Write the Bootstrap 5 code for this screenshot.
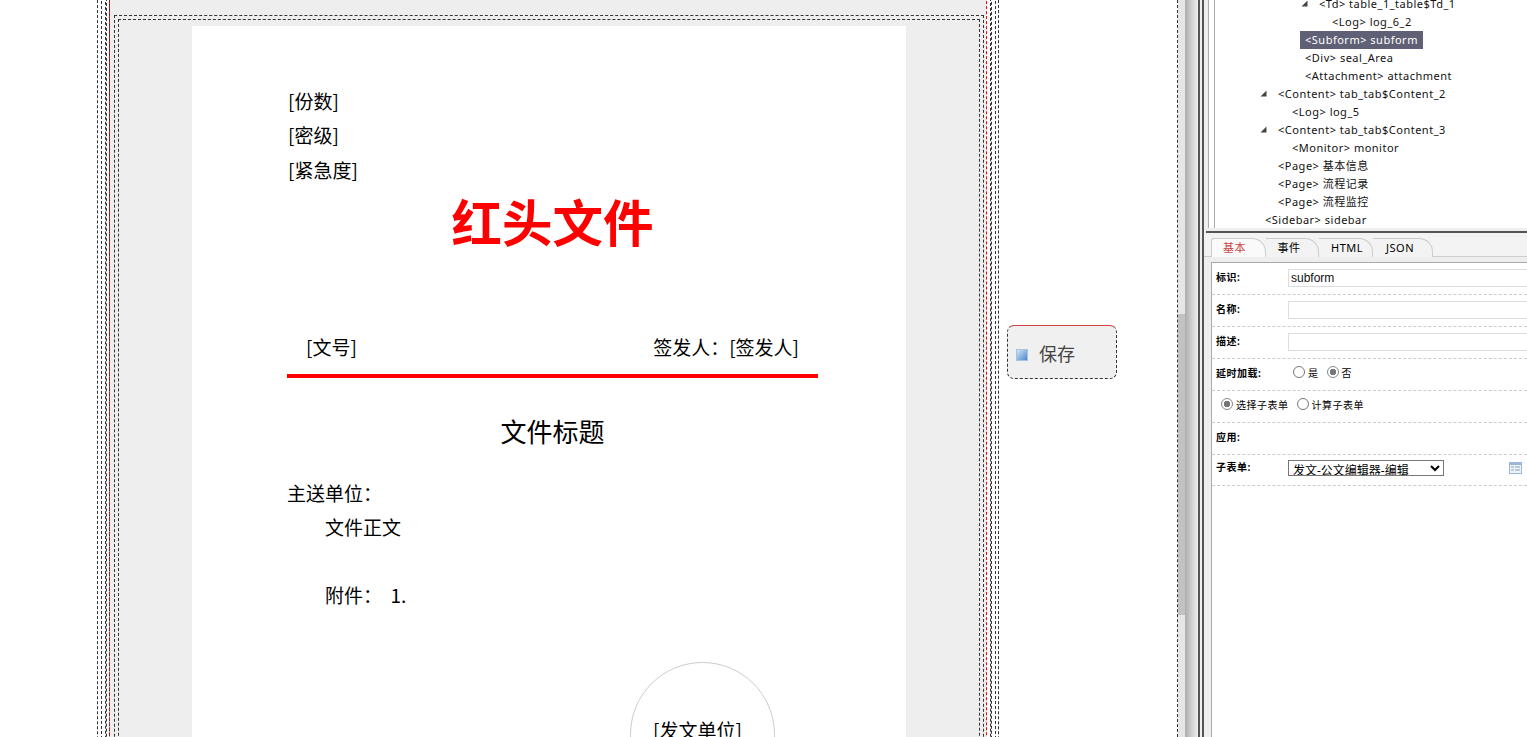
<!DOCTYPE html>
<html lang="zh">
  <head>
    <meta charset="UTF-8">
    <title>表单设计器</title>
    <link href="https://cdn.jsdelivr.net/npm/bootstrap@5.3.0/dist/css/bootstrap.min.css" rel="stylesheet">
    <style>
      html, body { height: 737px; overflow: hidden; }
      body { background: #fff; color: #000; font-family: "Liberation Sans", "Noto Sans CJK SC", sans-serif; }

      /* canvas with the nested design boxes */
      .canvas-pane { width: 1178px; height: 737px; border-right: 1px dashed #333; overflow: hidden; flex: none; }
      .form-col { width: 902px; margin-left: 97px; margin-top: -40px; flex: none; }
      .dash { border: 1px dashed #333; }
      .b1 { padding: 0 2px 0 3px; height: 1200px; }
      .b2 { padding: 0 3px 0 3px; height: 100%; }
      .b3 { height: 100%; padding: 0; }
      .b3a { height: 100%; padding: 0 3px 0 2px; }
      .b4 { height: 100%; border-left: 1px dashed #333; position: relative; background: #eee; padding: 51px 3px 0 4px; }
      .b4::before { content: ""; position: absolute; top: -3px; bottom: 0; left: -1px; right: 0; border: 1px dashed #f00; border-width: 0 1px; }
      .b5 { height: 100%; padding: 3px 3px 0 3px; }
      .b6 { height: 100%; padding: 6px 73px 0 73px; }
      .paper { background: #fff; height: 100%; padding: 58px 88px 0 95px; font-family: "Noto Sans CJK SC", "Liberation Sans", sans-serif; font-size: 19px; line-height: 34px; }
      .num-line { padding-left: 1px; height: 34.4px; }
      .red-title { color: #f00; font-size: 50.5px; font-weight: 700; line-height: 60px; text-align: center; margin-top: 3px; height: 60px; }
      .sign-row { margin-top: 80px; padding: 0 19px 0 19px; height: 34px; }
      .red-rule { height: 4px; background: #f00; margin-top: 9.8px; }
      .doc-title { font-size: 26px; text-align: center; margin-top: 33.2px; line-height: 40px; }
      .to-line { margin-top: 25px; }
      .body-line { padding-left: 38px; }
      .attach-line { padding-left: 38px; margin-top: 34px; }
      .seal { width: 145px; height: 145px; border-radius: 50%; border: 1.5px solid #ccc; margin: 50px 0 0 343px; padding: 50px 10px 0 0; text-align: center; white-space: nowrap; }

      .save-col { margin-left: 8px; padding-top: 325px; flex: none; }
      .save-btn { width: 110px; height: 54px; background: #f0f0f0; border: 1px dashed #333; border-top: 1px solid #c44; border-radius: 7px; padding: 6px 0 0 8px; color: #444; font-size: 18px; gap: 11px; }
      .save-ico { width: 12px; height: 12px; background: linear-gradient(135deg, #d3e4f6, #4a88cb); border: 1px solid #a8c2e0; }

      /* splitter */
      .split { width: 26px; flex: none; position: relative; }
      .split-flat { width: 7px; background: #e6e6e6; }
      .split-thumb { position: absolute; left: 0; top: 314px; width: 7px; height: 301px; background: #c2c2c2; }
      .split-grad { width: 13px; background: linear-gradient(90deg, #adadad, #efefef); }
      .split-dark { width: 2px; background: #555; }
      .split-light { width: 2px; background: #eee; }

      /* tree + properties */
      .side { width: 323px; flex: none; background: #eee; overflow: hidden; font-family: "Noto Sans", "Noto Sans CJK SC", sans-serif; font-size: 11px; letter-spacing: .5px; }
      .tree-wrap { height: 228px; padding-left: 4px; overflow: hidden; }
      .tree-out { height: 100%; border-left: 1px solid #aaa; background: #fff; padding-left: 5px; }
      .tree-in { height: 100%; border-left: 1px solid #aaa; overflow: hidden; }
      .tree-list { margin-top: -5px; color: #111; }
      .node { height: 18px; line-height: 18px; white-space: nowrap; position: relative; }
      .at-50 { padding-left: 50px; } .at-63 { padding-left: 63px; } .at-77 { padding-left: 77px; }
      .at-90 { padding-left: 90px; } .at-104 { padding-left: 104px; } .at-117 { padding-left: 117px; }
      .sel-node { display: inline-block; background: #5f6075; color: #fff; height: 18px; padding: 0 5px; margin-left: -5px; }
      .arrow { position: absolute; top: 5px; width: 7px; height: 7px; }
      .arrow-td { left: 86px; }
      .arrow-ct { left: 45px; }
      .side-bar { height: 2px; background: #555; margin-top: 3px; margin-left: 2px; }

      .tab-strip { height: 24px; padding: 5px 0 0 7px; border-bottom: 1px solid #ccc; background: #f3f3f3; }
      .tab-item { height: 19px; line-height: 18px; text-align: center; border: 1px solid #ccc; border-bottom: 0; border-left: 0; border-top-right-radius: 14px; background: #f3f3f3; }
      .tab-a { width: 55px; color: #c44; border-left: 1px solid #ccc; border-top-left-radius: 3px; background: #fafafa; padding-right: 8px; }
      .tab-b { width: 53px; padding-right: 6px; }
      .tab-c { width: 54px; padding-left: 3px; }
      .tab-d { width: 60px; padding-right: 5px; }

      .props { margin: 5px 0 0 7px; background: #fff; height: 480px; border-left: 1px solid #aaa; border-top: 1px solid #aaa; }
      .prop-row { height: 32px; border-bottom: 1px dashed #ccc; padding: 0 0 2px 4px; white-space: nowrap; }
      .prop-row-last { height: 31px; padding-bottom: 5px; }
      .prop-label { width: 72px; flex: none; font-size: 10px; font-weight: 700; }
      .prop-input { width: 260px; height: 18px; border: 1px solid #ddd; background: #fff; padding: 0 2px; font-family: "Liberation Sans", sans-serif; font-size: 12px; letter-spacing: 0; line-height: 16px; color: #111; flex: none; }
      .prop-radio { appearance: none; width: 12px; height: 12px; border: 1px solid #777; border-radius: 50%; background: #fff; margin: 0 3px 3px 5px; flex: none; }
      .prop-radio:checked { background: radial-gradient(circle, #777 0 3px, #fff 3.5px); border-color: #888; }
      .prop-opt { font-size: 10px; margin-right: 3px; }
      .prop-select { width: 156px; height: 16px; font-size: 12px; letter-spacing: 0; font-family: inherit; padding: 0; border: 1px solid #777; background: #fff; flex: none; }
      .form-ico { margin-left: 65px; }
    </style>
  </head>
  <body class="d-flex">
    <div class="canvas-pane d-flex">
      <div class="form-col">
        <div class="dash b1">
          <div class="dash b2">
            <div class="dash b3">
              <div class="dash b3a">
                <div class="b4">
                  <div class="dash b5">
                    <div class="dash b6">
                      <div class="paper">
                        <div class="num-line">[份数]</div>
                        <div class="num-line">[密级]</div>
                        <div class="num-line">[紧急度]</div>
                        <div class="red-title">红头文件</div>
                        <div class="sign-row d-flex justify-content-between">
                          <span>[文号]</span>
                          <span>签发人：[签发人]</span>
                        </div>
                        <div class="red-rule"></div>
                        <div class="doc-title">文件标题</div>
                        <div class="to-line">主送单位：</div>
                        <div class="body-line">文件正文</div>
                        <div class="attach-line">附件： &nbsp;1.</div>
                        <div class="seal">[发文单位]</div>
                      </div>
                    </div>
                  </div>
                </div>
              </div>
            </div>
          </div>
        </div>
      </div>
      <div class="save-col">
        <div class="save-btn d-flex align-items-center">
          <span class="save-ico"></span>
          <span>保存</span>
        </div>
      </div>
    </div>

    <div class="split d-flex">
      <div class="split-flat"></div>
      <div class="split-thumb"></div>
      <div class="split-grad"></div>
      <div class="split-dark"></div>
      <div class="split-light"></div>
      <div class="split-dark"></div>
    </div>

    <div class="side">
      <div class="tree-wrap">
        <div class="tree-out">
          <div class="tree-in">
            <div class="tree-list">
              <div class="node at-104"><svg class="arrow arrow-td" viewBox="0 0 7 7"><polygon points="6.5,0.5 6.5,6.5 0.5,6.5" fill="#444"/></svg>&lt;Td&gt; table_1_table$Td_1</div>
              <div class="node at-117">&lt;Log&gt; log_6_2</div>
              <div class="node at-90"><span class="sel-node">&lt;Subform&gt; subform</span></div>
              <div class="node at-90">&lt;Div&gt; seal_Area</div>
              <div class="node at-90">&lt;Attachment&gt; attachment</div>
              <div class="node at-63"><svg class="arrow arrow-ct" viewBox="0 0 7 7"><polygon points="6.5,0.5 6.5,6.5 0.5,6.5" fill="#444"/></svg>&lt;Content&gt; tab_tab$Content_2</div>
              <div class="node at-77">&lt;Log&gt; log_5</div>
              <div class="node at-63"><svg class="arrow arrow-ct" viewBox="0 0 7 7"><polygon points="6.5,0.5 6.5,6.5 0.5,6.5" fill="#444"/></svg>&lt;Content&gt; tab_tab$Content_3</div>
              <div class="node at-77">&lt;Monitor&gt; monitor</div>
              <div class="node at-63">&lt;Page&gt; 基本信息</div>
              <div class="node at-63">&lt;Page&gt; 流程记录</div>
              <div class="node at-63">&lt;Page&gt; 流程监控</div>
              <div class="node at-50">&lt;Sidebar&gt; sidebar</div>
            </div>
          </div>
        </div>
      </div>
      <div class="side-bar"></div>
      <div class="tab-strip d-flex">
        <div class="tab-item tab-a">基本</div>
        <div class="tab-item tab-b">事件</div>
        <div class="tab-item tab-c">HTML</div>
        <div class="tab-item tab-d">JSON</div>
      </div>
      <div class="props">
        <div class="prop-row d-flex align-items-center">
          <span class="prop-label">标识:</span>
          <div class="prop-input">subform</div>
        </div>
        <div class="prop-row d-flex align-items-center">
          <span class="prop-label">名称:</span>
          <div class="prop-input"></div>
        </div>
        <div class="prop-row d-flex align-items-center">
          <span class="prop-label">描述:</span>
          <div class="prop-input"></div>
        </div>
        <div class="prop-row d-flex align-items-center">
          <span class="prop-label">延时加载:</span>
          <input class="prop-radio" type="radio" name="lazy"><span class="prop-opt">是</span>
          <input class="prop-radio" type="radio" name="lazy" checked><span class="prop-opt">否</span>
        </div>
        <div class="prop-row d-flex align-items-center">
          <input class="prop-radio" type="radio" name="kind" checked><span class="prop-opt">选择子表单</span>
          <input class="prop-radio" type="radio" name="kind"><span class="prop-opt">计算子表单</span>
        </div>
        <div class="prop-row d-flex align-items-center">
          <span class="prop-label">应用:</span>
        </div>
        <div class="prop-row prop-row-last d-flex align-items-center">
          <span class="prop-label">子表单:</span>
          <select class="prop-select"><option>发文-公文编辑器-编辑</option></select>
          <svg class="form-ico" width="13" height="12" viewBox="0 0 13 12"><rect x="0.5" y="0.5" width="12" height="11" fill="#eef3fa" stroke="#9db7dc"/><rect x="1" y="1" width="11" height="2" fill="#9db7dc"/><path d="M2 5h3M2 8h3M6 5h5M6 8h5" stroke="#8a9fbd"/></svg>
        </div>
      </div>
    </div>

    <script src="https://cdn.jsdelivr.net/npm/bootstrap@5.3.0/dist/js/bootstrap.bundle.min.js"></script>
  </body>
</html>
